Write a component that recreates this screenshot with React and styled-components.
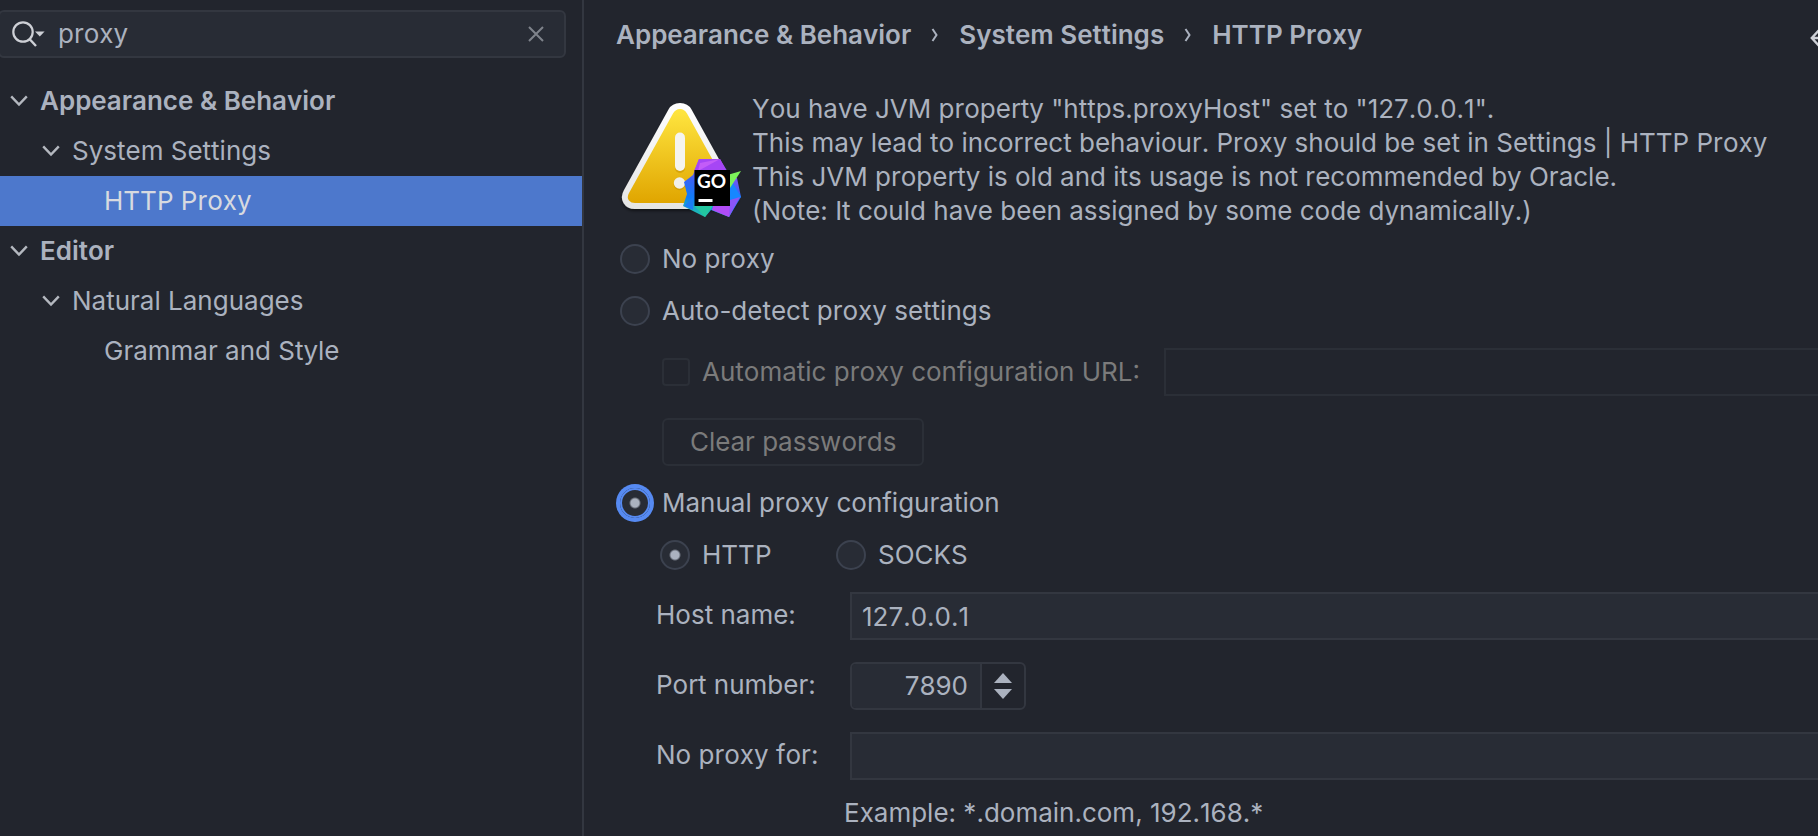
import React, { useState } from "react";
import styled, { createGlobalStyle, css } from "styled-components";

const c = {
  bg: "#22252d",
  field: "#282c35",
  line: "#333740",
  faint: "#2b2f37",
  text: "#abb2bf",
  disabled: "#7b7b7b",
  ring: "#568af2",
  selection: "#4d78cc",
};

const GlobalStyle = createGlobalStyle`
  * { box-sizing: border-box; }
  body {
    margin: 0;
    background: ${c.bg};
    color: ${c.text};
    font: 26px/34px Inter, "Liberation Sans", sans-serif;
    font-kerning: none;
    overflow: hidden;
  }
  input, button { font: inherit; font-kerning: inherit; color: inherit; margin: 0; }
  input:focus, button:focus { outline: none; }
`;

const Window = styled.div`
  display: flex;
  min-height: 100vh;
`;

const Sidebar = styled.aside`
  flex: 0 0 584px;
  padding-top: 10px;
  border-right: 2px solid ${c.line};
`;

const SearchBox = styled.label`
  display: flex;
  align-items: center;
  height: 48px;
  margin: 0 16px 18px -2px;
  padding: 0 20px 0 12px;
  gap: 12px;
  background: ${c.field};
  border: 2px solid ${c.line};
  border-radius: 6px;
`;

const SearchInput = styled.input`
  flex: 1;
  min-width: 0;
  padding: 0;
  border: 0;
  background: transparent;
`;

const IconButton = styled.button`
  display: flex;
  flex: none;
  padding: 0;
  border: 0;
  background: transparent;
`;

const Tree = styled.ul`
  margin: 0;
  padding: 0;
  list-style: none;
`;

const TreeRow = styled.li`
  display: flex;
  align-items: center;
  gap: 12px;
  height: 50px;
  padding-left: ${(p) => 10 + p.$level * 32}px;
  font-weight: ${(p) => (p.$level === 0 ? 600 : 400)};
  ${(p) =>
    p.$selected &&
    css`
      background: ${c.selection};
      color: #d7dae0;
    `}
`;

const ChevronSlot = styled.span`
  display: flex;
  width: 18px;
`;

const Main = styled.main`
  flex: 1;
  min-width: 0;
  padding: 18px 0 0 32px;
  overflow: hidden;
`;

const TopBar = styled.header`
  display: flex;
  align-items: center;
  justify-content: space-between;
  height: 34px;
  margin-bottom: 40px;
`;

const Crumbs = styled.nav`
  display: flex;
  align-items: center;
  font-weight: 600;
`;

const Separator = styled.span`
  display: flex;
  justify-content: center;
  width: 48px;
`;

const BackButton = styled(IconButton)`
  width: 8px;
  overflow: hidden;
  svg { flex: none; }
`;

const Warning = styled.section`
  display: flex;
  gap: 7px;
  height: 136px;
  margin-bottom: 14px;
`;

const WarningText = styled.p`
  margin: 0;
  white-space: pre;
`;

const Option = styled.label`
  display: flex;
  align-items: center;
  gap: 12px;
  height: 34px;
  white-space: nowrap;
`;

const Options = styled.div`
  display: flex;
  flex-direction: column;
  gap: 18px;
  padding-left: 4px;
`;

const Radio = styled.input.attrs({ type: "radio" })`
  appearance: none;
  flex: none;
  width: 30px;
  height: 30px;
  border: 2px solid #3c424f;
  border-radius: 50%;
  background: ${c.field};
  &:checked {
    background: radial-gradient(circle, ${c.text} 4px, ${c.field} 6px);
  }
  ${(p) =>
    p.$focused &&
    css`
      border-color: ${c.ring};
      box-shadow: 0 0 0 4px ${c.ring};
    `}
`;

const Checkbox = styled.input.attrs({ type: "checkbox" })`
  appearance: none;
  flex: none;
  width: 28px;
  height: 28px;
  border: 2px solid ${c.faint};
  border-radius: 4px;
`;

const AutoSettings = styled.div`
  display: flex;
  flex-direction: column;
  align-items: flex-start;
  gap: 22px;
  padding: 20px 0 20px 46px;
  color: ${c.disabled};
`;

const UrlRow = styled.div`
  display: flex;
  align-items: center;
  align-self: stretch;
  gap: 24px;
`;

const TextField = styled.input`
  flex: 1;
  min-width: 0;
  height: 48px;
  padding: 0 10px;
  border: 2px solid ${c.line};
  border-right: 0;
  border-radius: 0;
  background: ${c.field};
  &:disabled {
    border-color: ${c.faint};
    background: ${c.bg};
  }
`;

const ClearButton = styled.button`
  height: 48px;
  padding: 0 26px;
  border: 2px solid ${c.faint};
  border-radius: 6px;
  background: ${c.bg};
  &:disabled { color: ${c.disabled}; }
`;

const TypeRow = styled.div`
  display: grid;
  grid-template-columns: 176px auto;
  justify-content: start;
  padding: 18px 0 20px 44px;
`;

const Form = styled.div`
  display: grid;
  grid-template-columns: 194px 1fr;
  row-gap: 22px;
  align-items: center;
  padding-left: 40px;
`;

const FieldLabel = styled.label`
  padding-bottom: 2px;
`;

const Row = styled.div`
  display: flex;
`;

const Spinner = styled.div`
  display: flex;
  width: 176px;
  height: 48px;
  border: 2px solid ${c.line};
  border-radius: 6px;
  overflow: hidden;
`;

const SpinnerInput = styled.input`
  flex: 1;
  min-width: 0;
  padding: 0 12px;
  border: 0;
  background: ${c.field};
  text-align: right;
`;

const SpinnerButtons = styled.div`
  display: flex;
  flex-direction: column;
  align-items: center;
  justify-content: center;
  gap: 6px;
  width: 44px;
  border-left: 2px solid ${c.line};
`;

const Hint = styled.p`
  margin: 16px 0 0 228px;
`;

const Chevron = () => (
  <svg width="18" height="12" viewBox="0 0 18 12" fill="none" stroke="#b4b8bf" strokeWidth="2.4">
    <path d="M1.2 1.4 9 9.6l7.8-8.2" />
  </svg>
);

const SearchIcon = () => (
  <svg width="34" height="28" viewBox="0 0 34 28" fill="none">
    <circle cx="11" cy="12" r="9.7" stroke="#ced0d6" strokeWidth="2.2" />
    <path d="m17.5 19 6.5 7" stroke="#ced0d6" strokeWidth="2.4" />
    <path d="M23 11.500h9.600l-4.800 5z" fill="#ced0d6" />
  </svg>
);

const CloseIcon = () => (
  <svg width="16" height="16" viewBox="0 0 16 16" stroke="#7f838b" strokeWidth="2">
    <path d="m1 1 14 14M15 1 1 15" />
  </svg>
);

const CrumbArrow = () => (
  <svg width="8" height="14" viewBox="0 0 8 14" fill="none" stroke={c.text} strokeWidth="2">
    <path d="m1.5 1 4 6-4 6" />
  </svg>
);

const BackIcon = () => (
  <svg width="26" height="28" viewBox="0 0 26 28" fill="none" stroke="#ced0d6" strokeWidth="2.4">
    <path d="M11 7 1.800 17 11 27M2 17h24" />
  </svg>
);

const WarningIcon = () => (
  <svg width="129" height="128" viewBox="616 92 129 128" aria-label="Warning">
    <defs>
      <linearGradient id="sun" x1="0" y1="0" x2="0" y2="1">
        <stop offset="0" stopColor="#ffe640" />
        <stop offset="1" stopColor="#e0a500" />
      </linearGradient>
      <linearGradient id="rim" x1="0" y1="0" x2="0" y2="1">
        <stop offset="0" stopColor="#ffffff" />
        <stop offset="1" stopColor="#e4e4e4" />
      </linearGradient>
      <linearGradient id="gem" x1="0.6" y1="0" x2="0.3" y2="1">
        <stop offset="0" stopColor="#b74af7" />
        <stop offset="0.45" stopColor="#3a63f5" />
        <stop offset="0.75" stopColor="#0d7df8" />
        <stop offset="1" stopColor="#22c8a4" />
      </linearGradient>
      <filter id="soft" x="-10%" y="-10%" width="120%" height="125%">
        <feDropShadow dx="0" dy="2" stdDeviation="1.5" floodOpacity="0.5" />
      </filter>
    </defs>
    <path
      filter="url(#soft)"
      fill="url(#rim)"
      d="M668.5 109.500Q672 103 680 103Q688 103 691.500 109.500L736 190Q740 197 736.500 203Q733 209 725 209H635Q627 209 623.500 203Q620 197 624 190Z"
    />
    <path
      fill="url(#sun)"
      d="M673 113.500Q675.500 109 680 109Q684.500 109 687 113.500L731 193Q733.500 197.500 731 200.500Q729 203 725 203H635Q631 203 629 200.500Q626.500 197.500 629 193Z"
    />
    <rect x="675" y="134" width="10" height="39" rx="5" fill="#c08d00" opacity="0.5" />
    <rect x="675" y="132.500" width="10" height="38.500" rx="5" fill="#f5f4ef" />
    <circle cx="679.500" cy="184.500" r="5.700" fill="#c08d00" opacity="0.5" />
    <circle cx="679.500" cy="183" r="5.700" fill="#f1f0ea" />
    <path fill="url(#gem)" d="M699 159h21l9 15 8 4 4 19-12 20-18-7-6 7-22-11 4-12-3-12 9-7z" />
    <path fill="#a646f5" d="m699 159 21 0 6 12h-32z" />
    <path fill="#c35cf8" d="m720 159-22 12 2-8z" />
    <path fill="#1687ff" d="m730 178 11 19-11 9z" />
    <path fill="#b14cf6" d="M713 206h20l-4 11-17-7z" />
    <path fill="#8b55f7" d="m730 200 10-3-11 20z" />
    <path fill="#23c6a0" d="M694 206h19l-8 11z" />
    <path fill="#1c7df5" d="m684 206 9-9v13z" />
    <path fill="#7df35b" d="m724 176 17-5-11 17z" />
    <path fill="#000" d="M694.500 170h35.500v36h-35.500z" />
    <rect x="698.500" y="199" width="14" height="3" fill="#fff" />
    <text x="697" y="188" fontFamily="Lato, sans-serif" fontWeight="700" fontSize="19" fill="#fff">GO</text>
  </svg>
);

const Arrow = ({ down }) => (
  <svg width="18" height="10" viewBox="0 0 18 10" fill={c.text}>
    <path d={down ? "M0 0h18L9 10z" : "M0 10h18L9 0z"} />
  </svg>
);

const tree = [
  { label: "Appearance & Behavior", level: 0, open: true },
  { label: "System Settings", level: 1, open: true },
  { label: "HTTP Proxy", level: 2, selected: true },
  { label: "Editor", level: 0, open: true },
  { label: "Natural Languages", level: 1, open: true },
  { label: "Grammar and Style", level: 2 },
];

const crumbs = ["Appearance & Behavior", "System Settings", "HTTP Proxy"];

const warningText = `You have JVM property "https.proxyHost" set to "127.0.0.1".
This may lead to incorrect behaviour. Proxy should be set in Settings | HTTP Proxy
This JVM property is old and its usage is not recommended by Oracle.
(Note: It could have been assigned by some code dynamically.)`;

export default function App() {
  const [query, setQuery] = useState("proxy");
  const [mode, setMode] = useState("manual");
  const [type, setType] = useState("http");
  const [port, setPort] = useState(7890);

  const modeRadio = (value) => (
    <Radio
      name="mode"
      checked={mode === value}
      $focused={mode === value}
      onChange={() => setMode(value)}
    />
  );

  return (
    <>
      <GlobalStyle />
      <Window>
        <Sidebar>
          <SearchBox>
            <SearchIcon />
            <SearchInput
              aria-label="Search settings"
              value={query}
              onChange={(e) => setQuery(e.target.value)}
            />
            <IconButton type="button" aria-label="Clear search" onClick={() => setQuery("")}>
              <CloseIcon />
            </IconButton>
          </SearchBox>
          <Tree>
            {tree.map((item) => (
              <TreeRow key={item.label} $level={item.level} $selected={item.selected}>
                <ChevronSlot>{item.open && <Chevron />}</ChevronSlot>
                {item.label}
              </TreeRow>
            ))}
          </Tree>
        </Sidebar>

        <Main>
          <TopBar>
            <Crumbs aria-label="Breadcrumb">
              {crumbs.map((name, i) => (
                <React.Fragment key={name}>
                  {i > 0 && (
                    <Separator>
                      <CrumbArrow />
                    </Separator>
                  )}
                  <span>{name}</span>
                </React.Fragment>
              ))}
            </Crumbs>
            <BackButton type="button" aria-label="Back">
              <BackIcon />
            </BackButton>
          </TopBar>

          <Warning>
            <WarningIcon />
            <WarningText>{warningText}</WarningText>
          </Warning>

          <Options>
            <Option>{modeRadio("none")}No proxy</Option>
            <Option>{modeRadio("auto")}Auto-detect proxy settings</Option>
          </Options>

          <AutoSettings>
            <UrlRow>
              <Option>
                <Checkbox disabled />
                Automatic proxy configuration URL:
              </Option>
              <TextField disabled aria-label="Automatic proxy configuration URL" />
            </UrlRow>
            <ClearButton type="button" disabled>
              Clear passwords
            </ClearButton>
          </AutoSettings>

          <Options>
            <Option>{modeRadio("manual")}Manual proxy configuration</Option>
          </Options>

          <TypeRow>
            <Option>
              <Radio name="type" checked={type === "http"} onChange={() => setType("http")} />
              HTTP
            </Option>
            <Option>
              <Radio name="type" checked={type === "socks"} onChange={() => setType("socks")} />
              SOCKS
            </Option>
          </TypeRow>

          <Form>
            <FieldLabel htmlFor="host">Host name:</FieldLabel>
            <Row>
              <TextField id="host" defaultValue="127.0.0.1" />
            </Row>
            <FieldLabel htmlFor="port">Port number:</FieldLabel>
            <Spinner>
              <SpinnerInput
                id="port"
                value={port}
                onChange={(e) => setPort(Number(e.target.value) || 0)}
              />
              <SpinnerButtons>
                <IconButton type="button" aria-label="Increase" onClick={() => setPort(port + 1)}>
                  <Arrow />
                </IconButton>
                <IconButton type="button" aria-label="Decrease" onClick={() => setPort(port - 1)}>
                  <Arrow down />
                </IconButton>
              </SpinnerButtons>
            </Spinner>
            <FieldLabel htmlFor="exclude">No proxy for:</FieldLabel>
            <Row>
              <TextField id="exclude" />
            </Row>
          </Form>
          <Hint>Example: *.domain.com, 192.168.*</Hint>
        </Main>
      </Window>
    </>
  );
}
